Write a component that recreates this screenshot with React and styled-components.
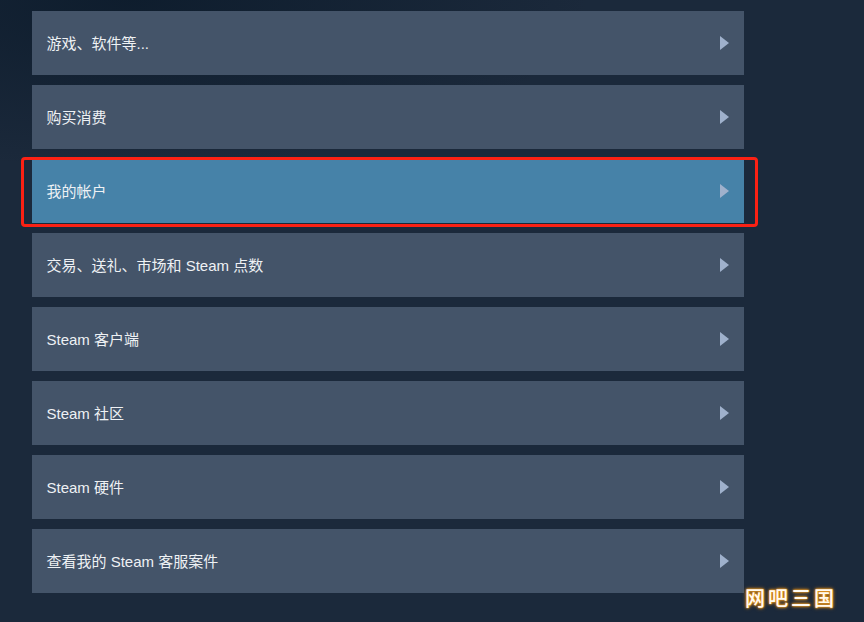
import React from "react";
import styled, { createGlobalStyle } from "styled-components";

const GlobalStyle = createGlobalStyle`
  html, body {
    margin: 0;
    padding: 0;
    height: 622px;
    overflow: hidden;
    background: #1b293b;
  }
`;

const Page = styled.div`
  position: relative;
  width: 864px;
  height: 622px;
  box-sizing: border-box;
  padding: 11px 120px 0 32px;
  background:
    radial-gradient(ellipse 460px 170px at 130px 0px, rgba(11, 26, 42, 0.8), rgba(11, 26, 42, 0)),
    #1b293b;
  font-family: "Liberation Sans", "Noto Sans CJK SC", sans-serif;
`;

const List = styled.div`
  display: flex;
  flex-direction: column;
  gap: 10px;
`;

const Row = styled.div`
  position: relative;
  display: flex;
  align-items: center;
  justify-content: space-between;
  height: 64px;
  padding: 0 15px 0 14.5px;
  background: ${(props) => (props.$active ? "#4682a8" : "#445469")};
  color: #eef1f4;
  font-size: 15px;
`;

const Label = styled.span`
  position: relative;
  top: -1px;
`;

const Arrow = styled.span`
  width: 0;
  height: 0;
  border-style: solid;
  border-width: 7px 0 7px 9px;
  border-color: transparent transparent transparent #9fb1cc;
`;

const Highlight = styled.div`
  position: absolute;
  top: -2px;
  bottom: -4px;
  left: -11px;
  right: -14px;
  border: 3px solid #fb2114;
  border-radius: 4px;
`;

const Watermark = styled.div`
  position: absolute;
  left: 745px;
  top: 586px;
  font-family: "Noto Sans CJK SC", sans-serif;
  font-size: 20px;
  font-weight: 500;
  line-height: 24px;
  letter-spacing: 3px;
  color: #fffaf0;
  text-shadow: 0 0 1px #f0961e, 0 0 2px #f5a623, 0 0 3px #e8901a, 0 0 4px #b9741c;
`;

const items = [
  "游戏、软件等...",
  "购买消费",
  "我的帐户",
  "交易、送礼、市场和 Steam 点数",
  "Steam 客户端",
  "Steam 社区",
  "Steam 硬件",
  "查看我的 Steam 客服案件",
];

export default function App() {
  return (
    <>
      <GlobalStyle />
      <Page>
        <List>
          {items.map((label) => (
            <Row key={label} $active={label === "我的帐户"}>
              <Label>{label}</Label>
              <Arrow />
              {label === "我的帐户" && <Highlight />}
            </Row>
          ))}
        </List>
        <Watermark>网吧三国</Watermark>
      </Page>
    </>
  );
}
